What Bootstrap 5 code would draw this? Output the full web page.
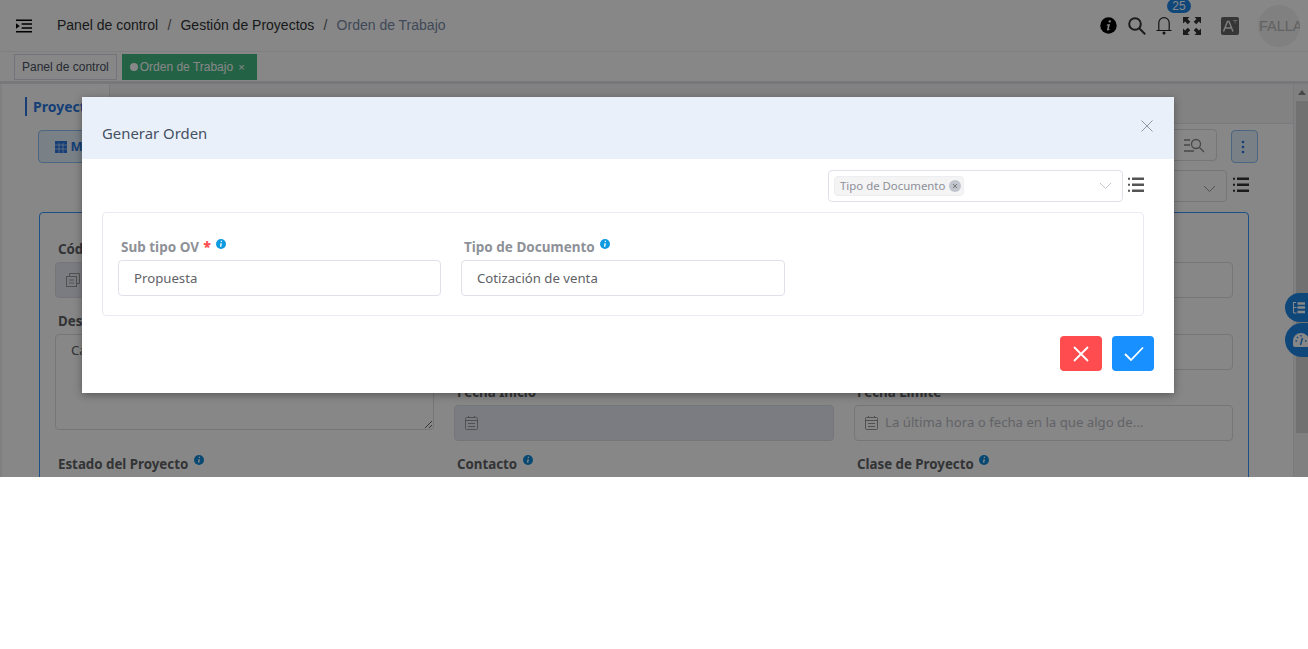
<!DOCTYPE html>
<html lang="es">
<head>
  <meta charset="UTF-8">
  <meta name="viewport" content="width=device-width, initial-scale=1.0">
  <title>Orden de Trabajo</title>
  <link href="https://cdn.jsdelivr.net/npm/bootstrap@5.3.0/dist/css/bootstrap.min.css" rel="stylesheet">
  <style>
    body { background: #fff; font-family: "Liberation Sans", Arial, sans-serif; overflow: hidden; }
    .app-shell { height: 477px; overflow: hidden; position: relative; background: #fff; }
    .top-bar { height: 52px; padding: 0 8px 0 16px; border-bottom: 1px solid #f0f0f0; background: #fff; }
    .top-bar .breadcrumb { font-size: 14px; --bs-breadcrumb-margin-bottom: 0; --bs-breadcrumb-item-padding-x: 9.2px; margin-left: 25px; }
    .top-bar .breadcrumb-item { color: #303133; }
    .top-bar .breadcrumb-item.active { color: #7a8aa8; }
    .top-icons { position: relative; }
    .top-gap { margin-left: 11px; }
    .top-gap-s { margin-left: 10px; }
    .bell-count { position: absolute; left: 67px; top: -6px; width: 24px; height: 14px; border-radius: 7px; background: #1f87e8; color: #fff; font-size: 12px; line-height: 14px; text-align: center; }
    .user-dot { width: 42px; height: 42px; border-radius: 50%; background: #f1f1f1; color: #b9b9b9; font-size: 14.5px; line-height: 42px; overflow: hidden; white-space: nowrap; margin-left: 19px; padding-left: 1px; }
    .tab-bar { height: 32px; padding: 2px 14px 0; background: #fff; border-bottom: 3px solid #e3e3e8; gap: 5px; }
    .tab-chip { height: 26px; font-size: 12px; line-height: 24px; padding: 0 7px; border: 1px solid #d8dce5; color: #495060; background: #fff; white-space: nowrap; }
    .tab-chip.is-on { background: #42b983; border-color: #42b983; color: #fff; line-height: 24px; padding: 0 11px 0 7px; }
    .tab-chip.is-on i { display: inline-block; width: 8px; height: 8px; border-radius: 50%; background: #fff; margin-right: 2px; }
    .tab-chip.is-on span { margin-left: 5px; font-size: 11px; }
    .work-area { height: 393px; }
    .page-pane { width: 1294px; padding-left: 2px; font-family: "Noto Sans", "Open Sans", sans-serif; background: #f1f1f1; }
    .page-scroll { width: 14px; background: #f1f1f1; padding: 6px 0 0 2px; }
    .scroll-arrow { width: 0; height: 0; margin: 0 0 6px 2px; border: 4px solid transparent; border-top: 0; border-bottom: 5px solid #8a8a8a; }
    .scroll-thumb { background: #d6d6d6; height: 332px; }
    .pane-tabs { height: 40px; background: #f5f5f7; border-bottom: 1px solid #e4e7ed; border-right: 1px solid #e4e7ed; }
    .pane-tab { width: 108px; background: #fff; border-right: 1px solid #e4e7ed; color: #2a78e0; font-weight: 700; font-size: 14px; padding: 12px 0 0 23px; height: 40px; }
    .pane-tab span { border-left: 2px solid #2a78e0; padding-left: 6px; }
    .pane-body { background: #fff; height: 353px; padding: 6px 35px 0 36px; position: relative; border-right: 1px solid #e4e7ed; }
    .tool-row { height: 33px; }
    .tool-main { height: 33px; border: 1px solid #8cc0f5; background: #e5f1fd; border-radius: 4px; color: #2a78e0; font-weight: 700; font-size: 13px; padding: 6px 16px; width: 120px; }
    .tool-btn { width: 78px; height: 32px; margin-top: -1px; border: 1px solid #dcdfe6; border-radius: 4px; background: #fff; margin-left: auto; margin-right: 14px; text-align: right; padding: 2px 10px; }
    .tool-more { width: 27px; height: 33px; border: 1px solid #8cc0f5; background: #e5f1fd; border-radius: 4px; padding: 9px 0 0 9px; line-height: 0; }
    .select-row { height: 32px; margin-top: 7px; margin-bottom: 10px; justify-content: flex-end; gap: 6px; margin-right: 9px; }
    .select-stub { width: 300px; height: 32px; border: 1px solid #dcdfe6; border-radius: 4px; background: #fff; text-align: right; padding: 4px 10px 0 0; }
    .list-mark { margin-top: -2px; }
    .form-box { border: 1px solid #3399ff; border-radius: 4px; padding: 27px 15px 0; height: 300px; background: #fff; margin: 0 9px 0 1px; }
    .form-cols { display: grid; grid-template-columns: 379px 380px 379px; column-gap: 20px; }
    .field-cell { height: 71.5px; }
    .field-tall { grid-row: span 2; }
    .field-label { font-size: 13.3px; font-weight: 700; color: #606266; line-height: 18px; height: 22px; padding-left: 3px; white-space: nowrap; }
    .field-label svg, .pick-label svg { vertical-align: 4px; margin-left: 2px; }
    .field-box { height: 36px; border: 1px solid #dcdfe6; border-radius: 4px; background: #fff; font-size: 13.2px; color: #b9bcc4; padding: 0 10px; white-space: nowrap; overflow: hidden; gap: 7px; }
    .field-box.is-off { background: #e8ebf3; }
    .field-area { display: block; width: 100%; height: 96px; color: #606266; padding: 6px 15px; font-family: inherit; outline: 0; }
    .drawer-btn { position: absolute; left: 1285px; width: 40px; height: 29px; border-radius: 15px 0 0 15px; background: #1f87e8; padding: 9px 0 0 8px; line-height: 0; }
    .drawer-btn.is-low { top: 323px; height: 34px; border-radius: 17px 0 0 17px; padding-top: 10px; }
    .drawer-btn.is-up { top: 293px; }
    .dim-layer { position: absolute; inset: 0; background: rgba(0, 0, 0, .47); }
    .order-dialog { position: absolute; left: 82px; top: 97px; width: 1092px; height: 296px; border: 0; border-radius: 0; background: #fff; box-shadow: 0 2px 8px rgba(0, 0, 0, .35); font-family: "Noto Sans", "Open Sans", sans-serif; }
    .order-dialog .modal-header { height: 62px; background: #e9f0f9; border: 0; border-radius: 0; padding: 10px 20px 0; }
    .order-dialog .modal-title { font-size: 14.9px; font-weight: 400; color: #465062; line-height: 1.5; }
    .close-x { border: 0; background: none; padding: 0; line-height: 0; margin: -14px 1px 0 0; }
    .order-dialog .modal-body { padding: 11px 20px 0; }
    .pick-row { justify-content: flex-end; gap: 5px; margin-right: 10px; height: 32px; }
    .pick-box { width: 295px; height: 32px; border: 1px solid #dfe1ea; border-radius: 4px; padding: 5px 10px 0 5px; }
    .pick-tag { height: 20px; border: 1px solid #eceef2; background: #f4f4f5; border-radius: 4px; color: #8d9098; font-size: 11.4px; line-height: 18px; padding: 0 2px 0 5px; gap: 4px; }
    .pick-tag i { width: 12px; height: 12px; border-radius: 50%; background: #c0c4cc; display: block; line-height: 0; padding: 3px; }
    .pick-arrow { margin-top: 6px; }
    .doc-frame { margin: 10px 10px 0 0; height: 104px; border: 1px solid #e8ebf3; border-radius: 4px; padding: 21px 15px 0; gap: 20px; }
    .pick-col { width: 323px; }
    .pick-col + .pick-col { width: 324px; }
    .pick-label { font-size: 13.5px; font-weight: 700; color: #8e9198; line-height: 26px; height: 26px; padding-left: 3px; white-space: nowrap; }
    .pick-label svg { vertical-align: 3px; }
    .pick-label b { color: #ff4d4f; margin-left: 1px; }
    .pick-value { height: 36px; border: 1px solid #dfe1ea; border-radius: 4px; font-size: 13.2px; line-height: 34px; padding: 0 15px; color: #606266; }
    .act-row { gap: 10px; justify-content: flex-end; margin-top: 20px; }
    .act-btn { width: 42px; height: 35px; border: 0; border-radius: 4px; line-height: 0; padding: 0; }
    .act-no { background: #ff4d4f; }
    .act-yes { background: #1890ff; }
  </style>
</head>
<body>
  <div class="app-shell">
    <div class="top-bar d-flex align-items-center">
      <svg width="16" height="14" viewBox="0 0 17 14"><path d="M0 .8h17M6 4.800h11M6 9h11M0 13.200h17" stroke="#000" stroke-width="1.600"/><path d="M0 4l4 3-4 3z"/></svg>
      <nav aria-label="breadcrumb">
        <ol class="breadcrumb">
          <li class="breadcrumb-item">Panel de control</li>
          <li class="breadcrumb-item">Gestión de Proyectos</li>
          <li class="breadcrumb-item active" aria-current="page">Orden de Trabajo</li>
        </ol>
      </nav>
      <div class="top-icons d-flex align-items-center ms-auto">
        <svg width="17" height="17" viewBox="0 0 17 17"><circle cx="8.500" cy="8.500" r="8.200"/><path d="M9.800 3.200a1.200 1.200 0 1 1-.1 2.400 1.200 1.200 0 0 1 .1-2.400zM6.800 7.400l3.200-.4-1.300 5.200c0 .3.3.3.9-.2l.3.4c-1.100 1.200-3.100 1.600-2.900.1l1-3.900-1.300.1z" fill="#fff"/></svg>
        <svg class="top-gap" width="18" height="18" viewBox="0 0 18 18" fill="none" stroke="#333" stroke-width="2"><circle cx="7" cy="7" r="5.800"/><path d="M11.200 11.200L17.200 17.200"/></svg>
        <svg class="top-gap-s" width="16" height="18" viewBox="0 0 16 18" fill="none" stroke="#222" stroke-width="1.200"><path d="M.5 13.500h15M2.800 13.500V6a5.200 5.400 0 0 1 10.400 0v7.500"/><circle cx="8" cy="16" r=".9" fill="#222"/></svg>
        <span class="bell-count">25</span>
        <svg class="top-gap" width="18" height="18" viewBox="0 0 18 18" fill="#333"><path d="M0 0h6.500L4.500 2l2.800 2.800-2.500 2.500L2 4.500 0 6.500zM18 0v6.500l-2-2-2.800 2.800-2.500-2.500L13.500 2l-2-2zM0 18v-6.500l2 2 2.800-2.800 2.500 2.500L4.500 16l2 2zM18 18h-6.500l2-2-2.800-2.800 2.500-2.500 2.800 2.800 2-2z"/></svg>
        <svg style="margin-left:20px" width="18" height="18" viewBox="0 0 18 18"><rect width="18" height="18" rx="2" fill="#666"/><path d="M2.500 14.500L6.500 4.500h1.500l4 10M4 11h7" fill="none" stroke="#eee" stroke-width="1.500"/><path d="M12 3.500h4.500M14.200 3.500v3" stroke="#bbb" fill="none"/></svg>
        <div class="user-dot">FALLA</div>
      </div>
    </div>
    <div class="tab-bar d-flex">
      <div class="tab-chip">Panel de control</div>
      <div class="tab-chip is-on"><i></i>Orden de Trabajo<span>×</span></div>
    </div>
    <div class="work-area d-flex">
      <div class="page-pane">
        <div class="pane-tabs d-flex"><div class="pane-tab"><span>Proyecto</span></div></div>
        <div class="pane-body">
          <div class="tool-row d-flex">
            <div class="tool-main"><svg width="12" height="12" viewBox="0 0 12 12" fill="#2a78e0"><path d="M0 0h12v12H0z"/><path d="M0 4h12M0 8h12M4 2v10M8 2v10" stroke="#e5f1fd" stroke-width=".6"/></svg> Modo</div>
            <div class="tool-btn"><svg width="22" height="16" viewBox="0 0 22 16" fill="none" stroke="#888" stroke-width="1.300"><path d="M0 2h6M0 7h6M0 13h10"/><circle cx="12" cy="6" r="4.500"/><path d="M15 9l5 5"/></svg></div>
            <div class="tool-more"><svg width="4" height="14" viewBox="0 0 4 14" fill="#2a78e0"><circle cx="2" cy="2" r="1.300"/><circle cx="2" cy="7" r="1.300"/><circle cx="2" cy="12" r="1.300"/></svg></div>
          </div>
          <div class="select-row d-flex align-items-center">
            <div class="select-stub"><svg width="13" height="8" viewBox="0 0 13 8" fill="none" stroke="#999"><path d="M1 1l5.500 5.500L12 1"/></svg></div>
            <svg class="list-mark" width="16" height="16" viewBox="0 0 16 16" fill="#333"><path d="M4 .5h12V3H4zM4 6.500h12V9H4zM4 12.500h12V15H4zM0 .8h2v2H0zM0 6.800h2v2H0zM0 12.800h2v2H0z"/></svg>
          </div>
          <div class="form-box">
            <div class="form-cols">
              <div class="field-cell"><div class="field-label">Código</div><div class="field-box is-off d-flex align-items-center"><svg width="14" height="14" viewBox="0 0 14 14" fill="none" stroke="#999"><rect x=".5" y="3.500" width="10" height="10"/><path d="M3.500 3.500v-3h10v10h-3M3 7h5M3 10h5"/></svg></div></div>
              <div class="field-cell"><div class="field-label"></div><div class="field-box"></div></div>
              <div class="field-cell"><div class="field-label"></div><div class="field-box"></div></div>
              <div class="field-cell field-tall"><div class="field-label">Descripción</div><textarea class="field-box field-area" aria-label="Descripción">Ca</textarea></div>
              <div class="field-cell"><div class="field-label"></div><div class="field-box"></div></div>
              <div class="field-cell"><div class="field-label"></div><div class="field-box"></div></div>
              <div class="field-cell"><div class="field-label">Fecha Inicio *</div><div class="field-box is-off d-flex align-items-center"><svg width="13" height="14" viewBox="0 0 13 14" fill="none" stroke="#999"><rect x=".5" y="1.500" width="12" height="12" rx="1"/><path d="M.5 4.500h12M3 7.500h7M3 10.500h7M3.500 0v2M9.500 0v2"/></svg></div></div>
              <div class="field-cell"><div class="field-label">Fecha Límite *</div><div class="field-box d-flex align-items-center"><svg width="13" height="14" viewBox="0 0 13 14" fill="none" stroke="#999"><rect x=".5" y="1.500" width="12" height="12" rx="1"/><path d="M.5 4.500h12M3 7.500h7M3 10.500h7M3.500 0v2M9.500 0v2"/></svg> La última hora o fecha en la que algo de...</div></div>
              <div class="field-cell"><div class="field-label">Estado del Proyecto <svg width="10" height="10" viewBox="0 0 10 10"><circle cx="5" cy="5" r="5" fill="#0f8ad8"/><path d="M4.400 4.200h1.500L5.300 7.800H4zM4.800 1.800h1.200v1.200H4.800z" fill="#fff"/></svg></div></div>
              <div class="field-cell"><div class="field-label">Contacto <svg width="10" height="10" viewBox="0 0 10 10"><circle cx="5" cy="5" r="5" fill="#0f8ad8"/><path d="M4.400 4.200h1.500L5.300 7.800H4zM4.800 1.800h1.200v1.200H4.800z" fill="#fff"/></svg></div></div>
              <div class="field-cell"><div class="field-label">Clase de Proyecto <svg width="10" height="10" viewBox="0 0 10 10"><circle cx="5" cy="5" r="5" fill="#0f8ad8"/><path d="M4.400 4.200h1.500L5.300 7.800H4zM4.800 1.800h1.200v1.200H4.800z" fill="#fff"/></svg></div></div>
            </div>
          </div>
        </div>
      </div>
      <div class="page-scroll"><div class="scroll-arrow"></div><div class="scroll-thumb"></div></div>
    </div>
    <div class="drawer-btn is-up"><svg width="12" height="12" viewBox="0 0 12 12" fill="none" stroke="#fff"><path d="M.5 0v11h3M.5 5.500h3M0 .5h3"/><path d="M4.500 1.500H12M4.500 5.500H12M4.500 10H12" stroke-width="2.500"/></svg></div>
    <div class="drawer-btn is-low"><svg width="16" height="14" viewBox="0 0 16 14"><path d="M0 8a8 8 0 0 1 16 0v4q0 2-2 2H2q-2 0-2-2z" fill="#fff"/><path d="M7.500 12l2-7M2.500 8h1.500M4 4l1 1M8 2v1.500M12 8h1.500" stroke="#1f87e8" stroke-width="1.400"/></svg></div>
    <div class="dim-layer"></div>
    <div class="modal-content order-dialog" role="dialog" aria-label="Generar Orden">
      <div class="modal-header">
        <h5 class="modal-title">Generar Orden</h5>
        <button type="button" class="close-x ms-auto" aria-label="Cerrar"><svg width="12" height="12" viewBox="0 0 12 12" fill="none" stroke="#9298a3"><path d="M.5.500l11 11M11.500.500l-11 11"/></svg></button>
      </div>
      <div class="modal-body">
        <div class="pick-row d-flex align-items-center">
          <div class="pick-box d-flex">
            <div class="pick-tag d-flex align-items-center">Tipo de Documento <i><svg width="6" height="6" viewBox="0 0 6 6" stroke="#777" fill="none"><path d="M1 1l4 4M5 1L1 5"/></svg></i></div>
            <svg class="pick-arrow ms-auto" width="13" height="8" viewBox="0 0 13 8" fill="none" stroke="#c0c4cc"><path d="M1 1l5.500 5.500L12 1"/></svg>
          </div>
          <svg class="list-mark" width="16" height="16" viewBox="0 0 16 16" fill="#555"><path d="M4 .5h12V3H4zM4 6.500h12V9H4zM4 12.500h12V15H4zM0 .8h2v2H0zM0 6.800h2v2H0zM0 12.800h2v2H0z"/></svg>
        </div>
        <div class="doc-frame d-flex">
          <div class="pick-col">
            <div class="pick-label">Sub tipo OV <b>*</b> <svg width="10" height="10" viewBox="0 0 10 10"><circle cx="5" cy="5" r="5" fill="#0f9be0"/><path d="M4.400 4.200h1.500L5.300 7.800H4zM4.800 1.800h1.200v1.200H4.800z" fill="#fff"/></svg></div>
            <div class="pick-value">Propuesta</div>
          </div>
          <div class="pick-col">
            <div class="pick-label">Tipo de Documento <svg width="10" height="10" viewBox="0 0 10 10"><circle cx="5" cy="5" r="5" fill="#0f9be0"/><path d="M4.400 4.200h1.500L5.300 7.800H4zM4.800 1.800h1.200v1.200H4.800z" fill="#fff"/></svg></div>
            <div class="pick-value">Cotización de venta</div>
          </div>
        </div>
        <div class="act-row d-flex">
          <button type="button" class="act-btn act-no" aria-label="Cancelar"><svg width="16" height="16" viewBox="0 0 16 16" stroke="#fff" stroke-width="1.800" fill="none"><path d="M1 1l14 14M15 1L1 15"/></svg></button>
          <button type="button" class="act-btn act-yes" aria-label="Aceptar"><svg width="22" height="15" viewBox="-2 0 22 15" stroke="#fff" stroke-width="1.800" fill="none"><path d="M1 8l6 6L19 1.500"/></svg></button>
        </div>
      </div>
    </div>
  </div>
  <script src="https://cdn.jsdelivr.net/npm/bootstrap@5.3.0/dist/js/bootstrap.bundle.min.js"></script>
</body>
</html>
